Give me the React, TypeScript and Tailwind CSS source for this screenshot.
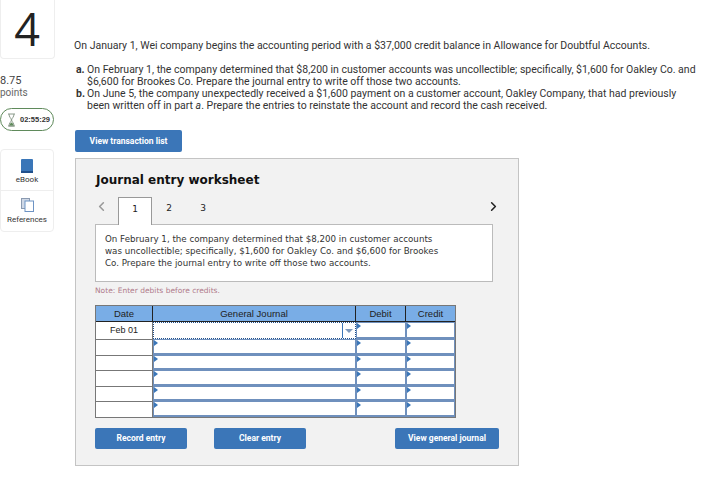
import React from 'react';
import { ChevronLeft, ChevronRight } from 'lucide-react';

const Marker = () => (
  <span className="absolute left-0 top-0 h-0 w-0 border-y-[3px] border-l-[4px] border-y-transparent border-l-[#3a76b8]" />
);

const EntryCell = ({ width }: { width: string }) => (
  <div className={`relative h-full shrink-0 border border-b-2 border-[#6f90bd] bg-white ${width}`}>
    <Marker />
  </div>
);

const rows = [0, 1, 2, 3, 4];

const App: React.FC = () => {
  return (
    <div className="flex h-[500px] w-[719px] overflow-hidden bg-white font-['Roboto',sans-serif] text-[#333]">
      {/* left rail */}
      <div className="w-[75px] shrink-0">
        <div className="flex h-[59px] w-[55px] items-center justify-center rounded-b border border-t-0 border-[#eee] pr-[1px] font-['Open_Sans',sans-serif] text-[45px] font-medium leading-[50px] text-[#222]">
          4
        </div>
        <div className="mt-[16px] text-[11px] leading-[11px] text-[#444]">8.75</div>
        <div className="mt-[1px] text-[10px] leading-[12px] text-[#666]">points</div>
        <div className="mt-[9px] flex h-[23px] w-[54px] items-center gap-[4px] rounded-full border border-[#5f8a5b] pl-[6px] font-['Liberation_Sans',sans-serif] text-[7.500px] font-bold text-[#333]">
          <svg width="9" height="14" viewBox="0 0 9 14">
            <path d="M1 1h7M1 13h7M2 1c0 3 2 4 2.500 6C4 9 2 10 2 13h5c0-3-2-4-2.500-6C5 5 7 4 7 1" fill="none" stroke="#8a9a8a" strokeWidth="1" />
            <path d="M2.500 12.500c.5-2 1.500-3 2-3s1.500 1 2 3z" fill="#5f8a5b" />
          </svg>
          <span>02:55:29</span>
        </div>
        <div className="mt-[18px] w-[54px] rounded border border-[#eee]">
          <div className="flex h-[41px] flex-col items-center justify-end border-b border-[#eee] pb-[5px]">
            <svg width="12" height="14" viewBox="0 0 12 14">
              <rect x="0" y="0" width="12" height="14" rx="1" fill="#3a76b8" />
              <rect x="0" y="12" width="12" height="2" fill="#20508c" />
            </svg>
            <span className="mt-[1px] text-[8px] leading-[11px] text-[#333]">eBook</span>
          </div>
          <div className="flex h-[40px] flex-col items-center justify-end pb-[6px]">
            <svg width="13" height="14" viewBox="0 0 13 14">
              <rect x="0.500" y="0.500" width="8" height="10" fill="#cfd8e6" stroke="#8a9ab0" />
              <rect x="4" y="3" width="8.500" height="10.500" fill="#fff" stroke="#6d93c4" />
            </svg>
            <span className="mt-[2px] text-[8px] leading-[11px] text-[#333]">References</span>
          </div>
        </div>
      </div>

      {/* main */}
      <div className="w-[644px] shrink-0 pt-[39px]">
        <p className="ml-[-1px] text-[10.500px] leading-[14px] text-[#333]">
          On January 1, Wei company begins the accounting period with a $37,000 credit balance in Allowance for Doubtful Accounts.
        </p>
        <div className="mt-[11px] w-[630px] text-[10.500px] leading-[12px] text-[#333]">
          <div className="flex">
            <span className="w-[12px] shrink-0 pl-[1px] font-bold">a.</span>
            <p>On February 1, the company determined that $8,200 in customer accounts was uncollectible; specifically, $1,600 for Oakley Co. and $6,600 for Brookes Co. Prepare the journal entry to write off those two accounts.</p>
          </div>
          <div className="flex">
            <span className="w-[12px] shrink-0 pl-[1px] font-bold">b.</span>
            <p className="pr-[15px]">On June 5, the company unexpectedly received a $1,600 payment on a customer account, Oakley Company, that had previously been written off in part <i>a</i>. Prepare the entries to reinstate the account and record the cash received.</p>
          </div>
        </div>

        <button className="mt-[18px] block h-[22px] w-[107px] rounded-[2px] bg-[#3b76b8] text-[8.500px] font-bold text-white">
          View transaction list
        </button>

        <div className="mt-[6px] h-[308px] w-[444px] border border-[#c4c4c4] bg-[#f2f2f2] pl-[19px] font-['DejaVu_Sans',sans-serif]">
          <h2 className="ml-[1px] mt-[13px] text-[12px] font-bold leading-[16px] text-[#111]">Journal entry worksheet</h2>

          <div className="mt-[9px] flex h-[27px] w-[406px] items-start">
            <ChevronLeft className="ml-[-1px] mt-[2px] h-[15px] w-[15px] text-[#999]" strokeWidth={2.500} />
            <div className="relative z-10 ml-[9px] flex h-[28px] w-[34px] items-center justify-center border border-b-0 border-[#999] bg-white pb-[3px] text-[9px] text-[#222]">1</div>
            <div className="flex h-[27px] w-[34px] items-center justify-center pb-[3px] text-[9px] text-[#222]">2</div>
            <div className="flex h-[27px] w-[34px] items-center justify-center pb-[3px] text-[9px] text-[#222]">3</div>
            <ChevronRight className="ml-auto mt-[2px] h-[15px] w-[15px] text-[#222]" strokeWidth={2.500} />
          </div>

          <div className="h-[58px] w-[398px] border border-[#bbb] bg-white pl-[9px] pr-[48px] pt-[8px] text-[8.700px] leading-[12px] text-[#333]">
            On February 1, the company determined that $8,200 in customer accounts was uncollectible; specifically, $1,600 for Oakley Co. and $6,600 for Brookes Co. Prepare the journal entry to write off those two accounts.
          </div>

          <p className="mt-[4px] text-[7.500px] leading-[10px] text-[#b07a8a]">Note: Enter debits before credits.</p>

          {/* journal table */}
          <div className="mt-[9px] w-[361px] border border-[#777] font-['Liberation_Sans',sans-serif] text-[9.500px] text-[#222]">
            <div className="flex h-[16px] border-b border-[#222] bg-[#79ade6] leading-[15px]">
              <div className="w-[57px] border-r border-[#222] text-center">Date</div>
              <div className="w-[203px] border-r border-[#222] text-center">General Journal</div>
              <div className="w-[50px] border-r border-[#222] text-center">Debit</div>
              <div className="flex-1 text-center">Credit</div>
            </div>
            <div className="flex h-[17px]">
              <div className="flex w-[57px] items-center justify-center border-r border-[#777] bg-white text-[9px]">Feb 01</div>
              <div className="relative flex w-[203px] justify-end border border-dotted border-[#20508c] bg-white">
                <div className="flex w-[13px] items-center justify-center border-l border-[#3a76b8]">
                  <span className="h-0 w-0 border-x-[4px] border-t-[4px] border-x-transparent border-t-[#7d99bd]" />
                </div>
              </div>
              <EntryCell width="w-[50px]" />
              <div className="relative flex-1 border border-b-2 border-[#6f90bd] bg-white"><Marker /></div>
            </div>
            {rows.map((row) => (
              <div key={row} className="flex h-[15.500px]">
                <div className="w-[57px] border-r border-t border-[#777] bg-white" />
                <EntryCell width="w-[203px]" />
                <EntryCell width="w-[50px]" />
                <div className="relative flex-1 border border-b-2 border-[#6f90bd] bg-white"><Marker /></div>
              </div>
            ))}
          </div>

          {/* actions */}
          <div className="mt-[10px] flex w-[404px] font-['Roboto',sans-serif] text-[8.500px] font-bold text-white">
            <button className="h-[21px] w-[92px] rounded-[2px] bg-[#3b76b8]">Record entry</button>
            <button className="ml-[27px] h-[21px] w-[92px] rounded-[2px] bg-[#3b76b8]">Clear entry</button>
            <button className="ml-auto h-[21px] w-[104px] rounded-[2px] bg-[#3b76b8]">View general journal</button>
          </div>
        </div>
      </div>
    </div>
  );
};

export default App;
